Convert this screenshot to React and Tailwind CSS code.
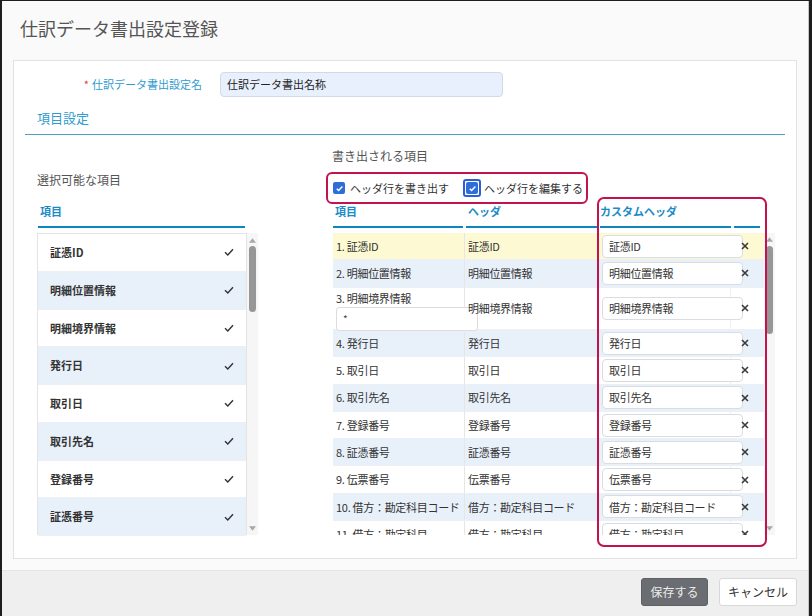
const leftItems = [
  '証憑ID',
  '明細位置情報',
  '明細境界情報',
  '発行日',
  '取引日',
  '取引先名',
  '登録番号',
  '証憑番号',
]

const rows = [
  { no: 1, name: '証憑ID', custom: '証憑ID' },
  { no: 2, name: '明細位置情報', custom: '明細位置情報' },
  { no: 3, name: '明細境界情報', custom: '明細境界情報', tall: true },
  { no: 4, name: '発行日', custom: '発行日' },
  { no: 5, name: '取引日', custom: '取引日' },
  { no: 6, name: '取引先名', custom: '取引先名' },
  { no: 7, name: '登録番号', custom: '登録番号' },
  { no: 8, name: '証憑番号', custom: '証憑番号' },
  { no: 9, name: '伝票番号', custom: '伝票番号' },
  { no: 10, name: '借方：勘定科目コード', custom: '借方：勘定科目コード' },
  { no: 11, name: '借方：勘定科目', custom: '借方：勘定科目' },
]

function rowBg(index) {
  if (index === 0) return 'bg-[#fdfad3]'
  return index % 2 === 1 ? 'bg-[#e8f0fa]' : 'bg-white'
}

function Checkbox({ focused }) {
  const box = (
    <span className="flex h-[12px] w-[12px] items-center justify-center rounded-[2px] bg-[#2f6ed8]">
      <svg viewBox="0 0 10 10" className="h-[9px] w-[9px]">
        <path d="M2 5.3l2 2 4.2-4.6" fill="none" stroke="#fff" strokeWidth="1.6" />
      </svg>
    </span>
  )
  if (!focused) return box
  return (
    <span className="flex rounded-[3px] border-2 border-[#2b5fd9] p-[1px]">{box}</span>
  )
}

function Scrollbar({ upTop, thumbTop, thumbHeight }) {
  return (
    <div className="flex h-[302px] w-[11px] flex-col items-center bg-[#f6f6f6]">
      <svg viewBox="0 0 8 5" className="w-[7px] h-[5px]" style={{ marginTop: upTop }}>
        <path d="M4 0L8 5H0z" fill="#a8a8a8" />
      </svg>
      <div
        className="w-[7px] rounded-full bg-[#979797]"
        style={{ marginTop: thumbTop, height: thumbHeight }}
      />
      <div className="flex-1" />
      <svg viewBox="0 0 8 5" className="mb-[4px] w-[7px] h-[5px]">
        <path d="M0 0H8L4 5z" fill="#a8a8a8" />
      </svg>
    </div>
  )
}

function CheckMark() {
  return (
    <svg viewBox="0 0 10 8" className="h-[8px] w-[10px]">
      <path d="M1 4.2l2.8 2.8L9 1.2" fill="none" stroke="#333" strokeWidth="1.4" />
    </svg>
  )
}

function CloseMark() {
  return (
    <svg viewBox="0 0 8 8" className="h-[8px] w-[8px]">
      <path d="M1 1l6 6M7 1L1 7" stroke="#3a3a3a" strokeWidth="1.6" />
    </svg>
  )
}

function AvailableList() {
  return (
    <div className="w-[221px] pt-[37px]">
      <p className="text-[12px] leading-[16px] text-[#555]">選択可能な項目</p>
      <div className="mt-[16px] ml-[1px] h-[24px] w-[207px] border-b-2 border-[#0b87be] pl-[2px] text-[11px] font-bold leading-[14px] text-[#1a8bc6]">
        項目
      </div>
      <div className="mt-[5px] flex">
        <div className="h-[302px] w-[210px] border-x border-t border-[#e4e4e4]">
          {leftItems.map((item, index) => (
            <div
              key={item}
              className={`flex h-[37.75px] items-center justify-between border-b border-[#eceff3] pl-[12px] pr-[12px] ${
                index % 2 === 1 ? 'bg-[#e8f0fa]' : 'bg-white'
              }`}
            >
              <span className="text-[11px] font-bold text-[#333]">{item}</span>
              <CheckMark />
            </div>
          ))}
        </div>
        <Scrollbar upTop={5} thumbTop={3} thumbHeight={66} />
      </div>
    </div>
  )
}

function ExportTable() {
  return (
    <div className="relative ml-[68px] w-[449px] pt-[13px]">
      <p className="ml-[6px] text-[12px] leading-[16px] text-[#555]">書き出される項目</p>
      <div className="mt-[8px] flex h-[32px] w-[262px] items-center rounded-[6px] border-2 border-[#c2134f] pl-[5px] text-[11px] text-[#333]">
        <Checkbox />
        <span className="ml-[5px]">ヘッダ行を書き出す</span>
        <span className="ml-[14px]">
          <Checkbox focused />
        </span>
        <span className="ml-[3px]">ヘッダ行を編集する</span>
      </div>

      <div className="ml-[7px] flex h-[24px] text-[11px] font-bold leading-[14px] text-[#1a8bc6]">
        <div className="w-[133px] pr-[3px]">
          <div className="h-full border-b-2 border-[#0b87be] pl-[2px]">項目</div>
        </div>
        <div className="w-[132px]">
          <div className="h-full border-b-2 border-[#0b87be] pl-[2px]">ヘッダ</div>
        </div>
        <div className="w-[135px] px-[2px]">
          <div className="h-full border-b-2 border-[#0b87be]">カスタムヘッダ</div>
        </div>
        <div className="w-[31px] pl-[1px] pr-[4px]">
          <div className="h-full border-b-2 border-[#0b87be]" />
        </div>
      </div>

      <div className="mt-[5px] flex">
        <div className="ml-[7px] h-[302px] w-[431px] overflow-hidden">
          {rows.map((row, index) => (
            <div
              key={row.no}
              className={`flex border-b border-[#eceff3] text-[11px] tracking-[-0.3px] text-[#333] ${rowBg(index)} ${
                row.tall ? 'h-[42.4px]' : 'h-[27.3px]'
              }`}
            >
              <div className="w-[132px] shrink-0 border-r border-[#e6e6e6] pl-[3px]">
                {row.tall ? (
                  <div className="pt-[3px]">
                    <div className="leading-[14px] whitespace-nowrap">
                      {row.no}. {row.name}
                    </div>
                    <div className="mt-[2px] flex h-[24px] w-[142px] items-center rounded-[3px] border border-[#dcdcdc] bg-white pl-[6px] text-[10px] text-[#444]">
                      *
                    </div>
                  </div>
                ) : (
                  <div className="flex h-full items-center whitespace-nowrap">
                    {row.no}. {row.name}
                  </div>
                )}
              </div>
              <div className="relative flex w-[132px] shrink-0 items-center whitespace-nowrap pl-[3px]">
                {row.name}
              </div>
              <div className="flex w-[134px] shrink-0 items-center border-r border-[#eef0f2] pl-[5px]">
                <div className="flex h-[23px] w-[141px] shrink-0 items-center whitespace-nowrap rounded-[4px] border border-[#d8dde3] bg-white pl-[6px]">
                  {row.custom}
                </div>
              </div>
              <div className="flex flex-1 items-center pl-[10px]">
                <CloseMark />
              </div>
            </div>
          ))}
        </div>
        <Scrollbar upTop={4} thumbTop={4} thumbHeight={88} />
      </div>

      <div className="pointer-events-none absolute left-[271px] top-[62px] h-[350px] w-[170px] rounded-[7px] border-2 border-[#c2134f]" />
    </div>
  )
}

export default function App() {
  return (
    <div className="h-[616px] w-[812px] overflow-hidden bg-[#1e1e1e] pl-[2px] pr-[3px] pt-[1px] font-['Noto_Sans_CJK_JP',sans-serif]">
      <div className="flex h-[615px] flex-col border-r border-[#c6c6c6] bg-[#fafafa]">
        <div className="h-[59px] pl-[18px] pt-[14px] text-[18px] leading-[26px] text-[#555]">
          仕訳データ書出設定登録
        </div>

        <div className="mx-[11px] h-[499px] shrink-0 overflow-hidden border border-[#e2e2e2] bg-white">
          <div className="flex items-center pt-[11px]">
            <div className="w-[188px] text-right text-[11px] text-[#2f9bd0]">
              <span className="mr-[3px] text-[#e0413a]">*</span>
              仕訳データ書出設定名
            </div>
            <div className="ml-[18px] flex h-[25px] w-[283px] items-center rounded-[4px] border border-[#d2dae6] bg-[#e8f0fe] pl-[6px] text-[11px] text-[#222]">
              仕訳データ書出名称
            </div>
          </div>

          <div className="mx-[11px] mt-[12px] border-b border-[#4f9fc0] pb-[7px] pl-[12px] text-[13px] leading-[18px] text-[#2f9bd0]">
            項目設定
          </div>

          <div className="flex pl-[23px]">
            <AvailableList />
            <ExportTable />
          </div>
        </div>

        <div className="mt-[11px] flex flex-1 justify-end gap-[11px] border-t border-[#e4e4e4] bg-[#efefef] pr-[11px] pt-[7px]">
          <button
            type="button"
            className="flex h-[28px] w-[67px] items-center justify-center rounded-[3px] border border-[#5e6164] bg-[#6a6d71] text-[12px] text-[#ececec]"
          >
            保存する
          </button>
          <button
            type="button"
            className="flex h-[28px] w-[78px] items-center justify-center rounded-[3px] border border-[#d8d8d8] bg-white text-[12px] text-[#333]"
          >
            キャンセル
          </button>
        </div>
      </div>
    </div>
  )
}
